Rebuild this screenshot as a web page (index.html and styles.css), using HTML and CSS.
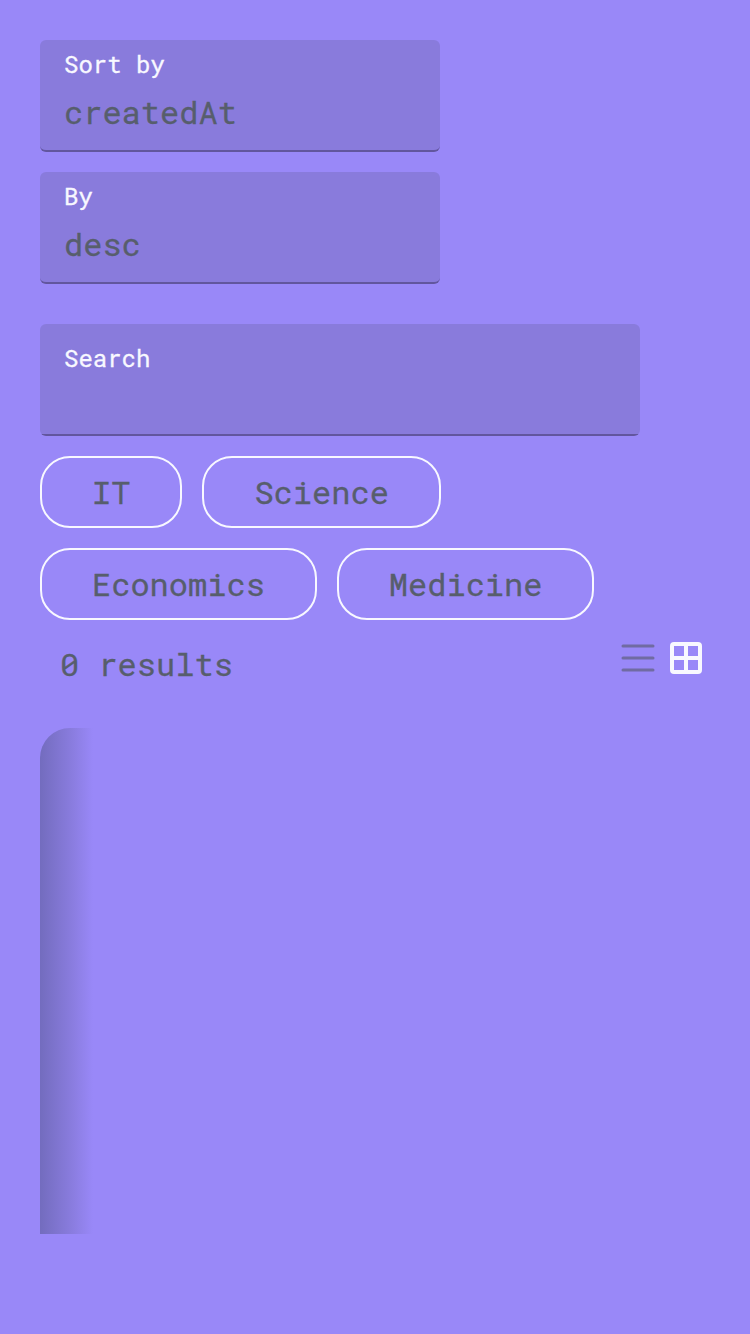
FILE: index.html
```html
<!DOCTYPE html>
<html lang="en">
<head>
<meta charset="utf-8">
<title>Results</title>
<link rel="stylesheet" href="styles.css">
</head>
<body>
<main class="page">
  <div class="sorting">
    <div class="field"><span class="label">Sort by</span><span class="value">createdAt</span></div>
    <div class="field"><span class="label">By</span><span class="value">desc</span></div>
  </div>
  <div class="field search"><span class="label">Search</span></div>
  <div class="chips">
    <button class="chip">IT</button>
    <button class="chip">Science</button>
    <button class="chip">Economics</button>
    <button class="chip">Medicine</button>
  </div>
  <div class="toolbar">
    <span class="count">0 results</span>
    <div class="views">
      <svg class="icon list" viewBox="0 0 36 36"><path d="M3 6H33M3 18H33M3 30H33"/></svg>
      <svg class="icon grid" viewBox="0 0 36 36"><rect x="4" y="4" width="28" height="28" rx="2"/><path d="M18 4V32M4 18H32"/></svg>
    </div>
  </div>
  <div class="results"></div>
</main>
</body>
</html>
```
FILE: styles.css
```css
* { box-sizing: border-box; }
body {
  margin: 0;
  background: #9988f8;
  color: #575e6c;
  font: 32px/40px "Roboto Mono", "DejaVu Sans Mono", monospace;
  -webkit-text-stroke: 0.3px currentColor;
}
.page { min-height: 1334px; padding: 40px; }
.sorting { display: flex; flex-direction: column; gap: 20px; }
.field {
  display: flex;
  flex-direction: column;
  width: 400px;
  height: 112px;
  padding: 8px 24px 0;
  border-radius: 6px;
  border-bottom: 2px solid #62569e;
  background: #897bdc;
}
.label { color: #f8f8ff; font-size: 24px; line-height: 32px; }
.value { margin-top: 12px; }
.search {
  width: 600px;
  margin-top: 40px;
  padding-top: 18px;
  border-bottom: 0;
  background: linear-gradient(#897bdc 110px, #62569e 110px);
}
.chips { display: flex; flex-wrap: wrap; gap: 20px; width: 600px; margin-top: 20px; }
.chip {
  height: 72px;
  padding: 0 50px;
  border: 2px solid #f8f8ff;
  border-radius: 30px;
  background: none;
  color: inherit;
  font: inherit;
}
.toolbar { display: flex; justify-content: space-between; height: 68px; margin-top: 20px; padding: 0 6px 0 20px; }
.count { padding-top: 4px; }
.views { display: flex; gap: 12px; }
.icon { width: 36px; height: 36px; fill: none; }
.list { stroke: #706ba2; stroke-width: 3; stroke-linecap: round; }
.grid { stroke: #f8f8ff; stroke-width: 4; }
.results {
  width: 53px;
  height: 506px;
  margin-top: 20px;
  border-radius: 30px 0 0 0;
  background: linear-gradient(90deg, #736cbe, #887bdc 56%, #9988f8);
}
```
